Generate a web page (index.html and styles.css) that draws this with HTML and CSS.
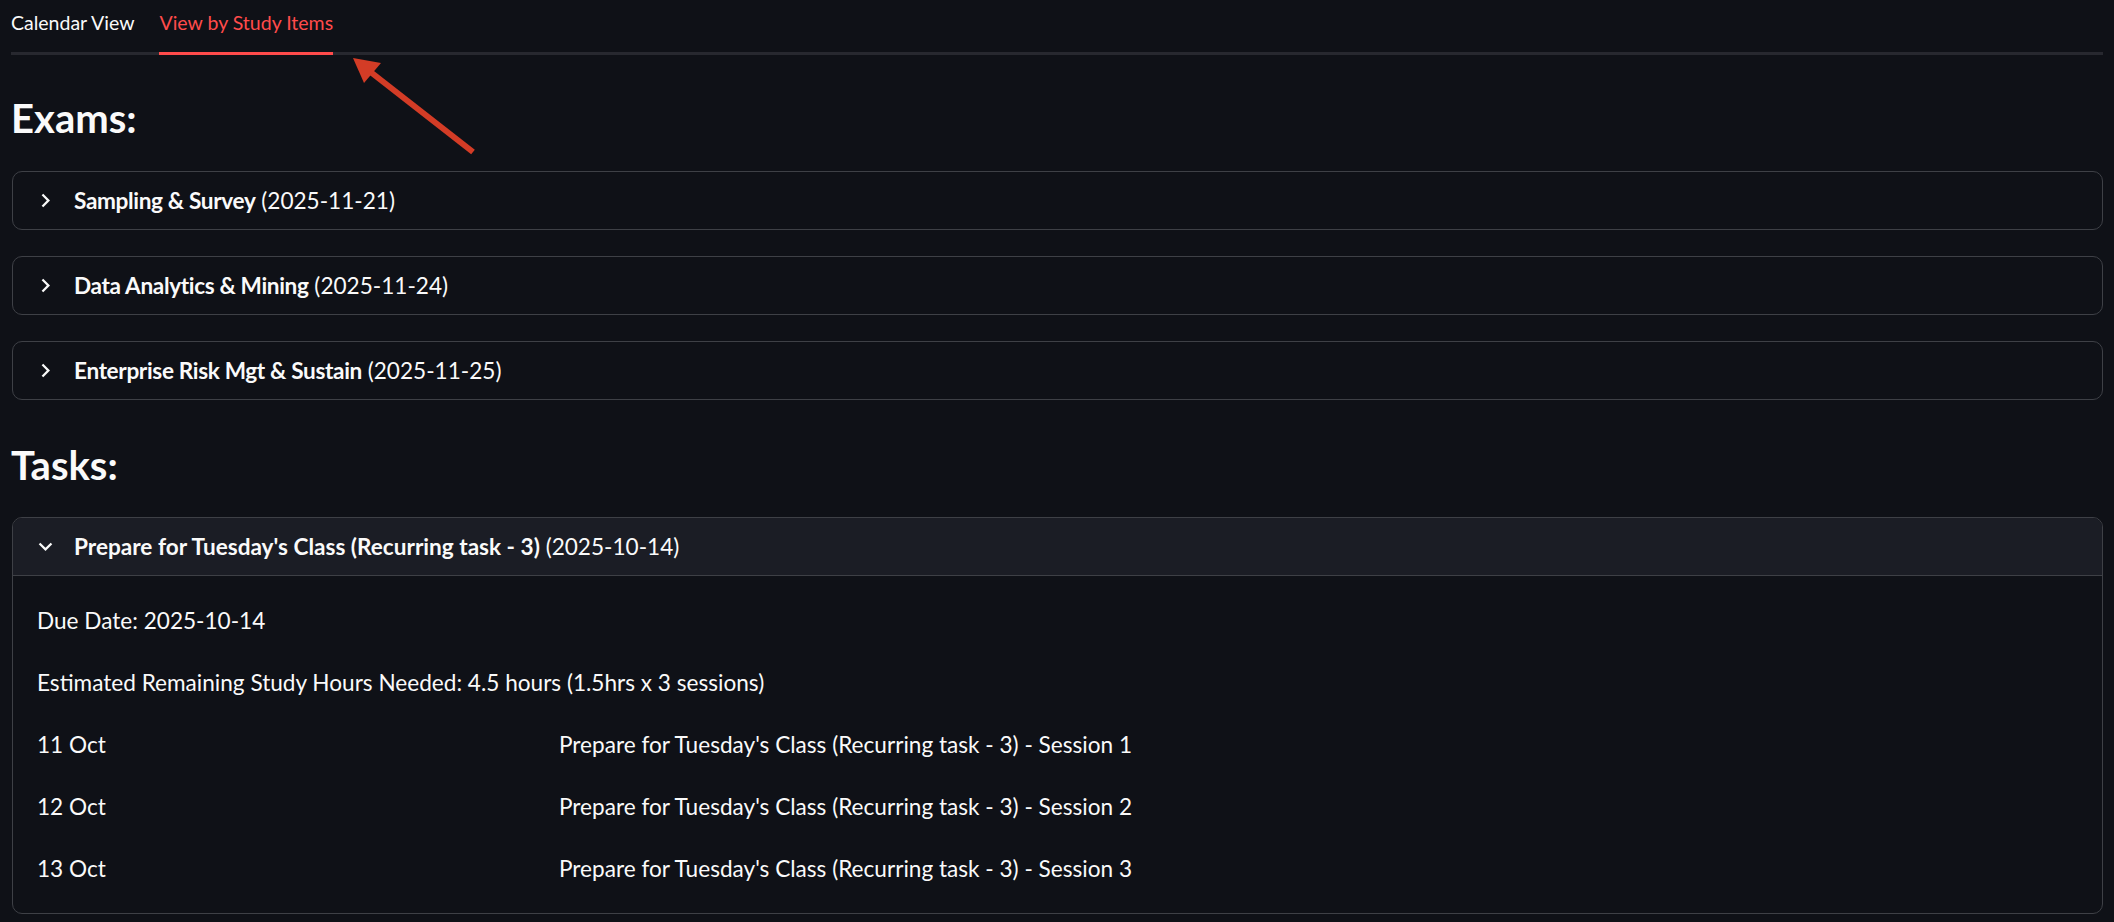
FILE: index.html
```html
<!DOCTYPE html>
<html>
<head>
<meta charset="utf-8">
<link rel="stylesheet" href="styles.css">
</head>
<body>
<div class="page">
  <div class="tabbar">
    <div class="tab">Calendar View</div>
    <div class="tab active">View by Study Items</div>
  </div>

  <h3 class="heading heading-exams">Exams:</h3>
  <div class="list">
    <div class="exp">
      <div class="exp-head">
        <svg class="chev" viewBox="0 0 24 24"><path d="M10 6L8.59 7.41 13.17 12l-4.58 4.59L10 18l6-6z"/></svg>
        <span class="label"><b>Sampling &amp; Survey</b> (2025-11-21)</span>
      </div>
    </div>
    <div class="exp">
      <div class="exp-head">
        <svg class="chev" viewBox="0 0 24 24"><path d="M10 6L8.59 7.41 13.17 12l-4.58 4.59L10 18l6-6z"/></svg>
        <span class="label"><b>Data Analytics &amp; Mining</b> (2025-11-24)</span>
      </div>
    </div>
    <div class="exp">
      <div class="exp-head">
        <svg class="chev" viewBox="0 0 24 24"><path d="M10 6L8.59 7.41 13.17 12l-4.58 4.59L10 18l6-6z"/></svg>
        <span class="label"><b>Enterprise Risk Mgt &amp; Sustain</b> (2025-11-25)</span>
      </div>
    </div>
  </div>

  <h3 class="heading heading-tasks">Tasks:</h3>
  <div class="exp open">
    <div class="exp-head">
      <svg class="chev" viewBox="0 0 24 24"><path d="M16.59 8.59L12 13.17 7.41 8.59 6 10l6 6 6-6z"/></svg>
      <span class="label"><b>Prepare for Tuesday's Class (Recurring task - 3)</b> (2025-10-14)</span>
    </div>
    <div class="exp-body">
      <p class="line">Due Date: 2025-10-14</p>
      <p class="line">Estimated Remaining Study Hours Needed: 4.5 hours (1.5hrs x 3 sessions)</p>
      <div class="row"><span>11 Oct</span><span>Prepare for Tuesday's Class (Recurring task - 3) - Session 1</span></div>
      <div class="row"><span>12 Oct</span><span>Prepare for Tuesday's Class (Recurring task - 3) - Session 2</span></div>
      <div class="row"><span>13 Oct</span><span>Prepare for Tuesday's Class (Recurring task - 3) - Session 3</span></div>
    </div>
  </div>
</div>

<svg class="arrow" width="2114" height="922" viewBox="0 0 2114 922">
  <line x1="473" y1="152" x2="368" y2="70" stroke="#d33c26" stroke-width="6"/>
  <polygon points="353,58 381,63 364,83" fill="#d33c26"/>
</svg>
</body>
</html>
```

FILE: styles.css
```css
html, body {
  margin: 0;
  padding: 0;
  background: #0f1117;
  color: #fafafa;
  font-family: Lato, "Noto Sans", sans-serif;
}

.page {
  padding: 0 11px 0 11px;
}

.tabbar {
  display: flex;
  gap: 25px;
  border-bottom: 3px solid #27282f;
}

.tab {
  height: 52px;
  line-height: 46px;
  font-size: 19.5px;
  margin-bottom: -3px;
  border-bottom: 3px solid transparent;
  box-sizing: content-box;
}

.tab.active {
  color: #ff4b4b;
  border-bottom-color: #ff4b4b;
}

.heading {
  font-size: 40px;
  font-weight: 700;
  line-height: 46px;
  margin: 0;
}

.heading-exams {
  margin-top: 40px;
  margin-bottom: 30px;
}

.heading-tasks {
  margin-top: 42px;
  margin-bottom: 29px;
}

.list {
  display: flex;
  flex-direction: column;
  gap: 26px;
}

.exp {
  border: 1px solid #3e4046;
  border-radius: 10px;
  margin-left: 1px;
  overflow: hidden;
}

.exp-head {
  height: 57px;
  display: flex;
  align-items: center;
  padding-left: 19px;
  gap: 15px;
  font-size: 22.6px;
}

.open .exp-head {
  background: #1b1d25;
  border-bottom: 1px solid #3e4046;
}

.chev {
  width: 27px;
  height: 27px;
  fill: #fafafa;
  flex: none;
}

.label b {
  font-weight: 700;
}

.list .label b {
  letter-spacing: -0.35px;
}

.exp-body {
  padding: 28px 24px 27px 24px;
  display: flex;
  flex-direction: column;
  gap: 28px;
  font-size: 22.6px;
}

.line {
  margin: 0;
  line-height: 34px;
}

.row {
  display: grid;
  grid-template-columns: 522px 1fr;
  line-height: 34px;
}

.arrow {
  position: absolute;
  left: 0;
  top: 0;
  pointer-events: none;
}
```
